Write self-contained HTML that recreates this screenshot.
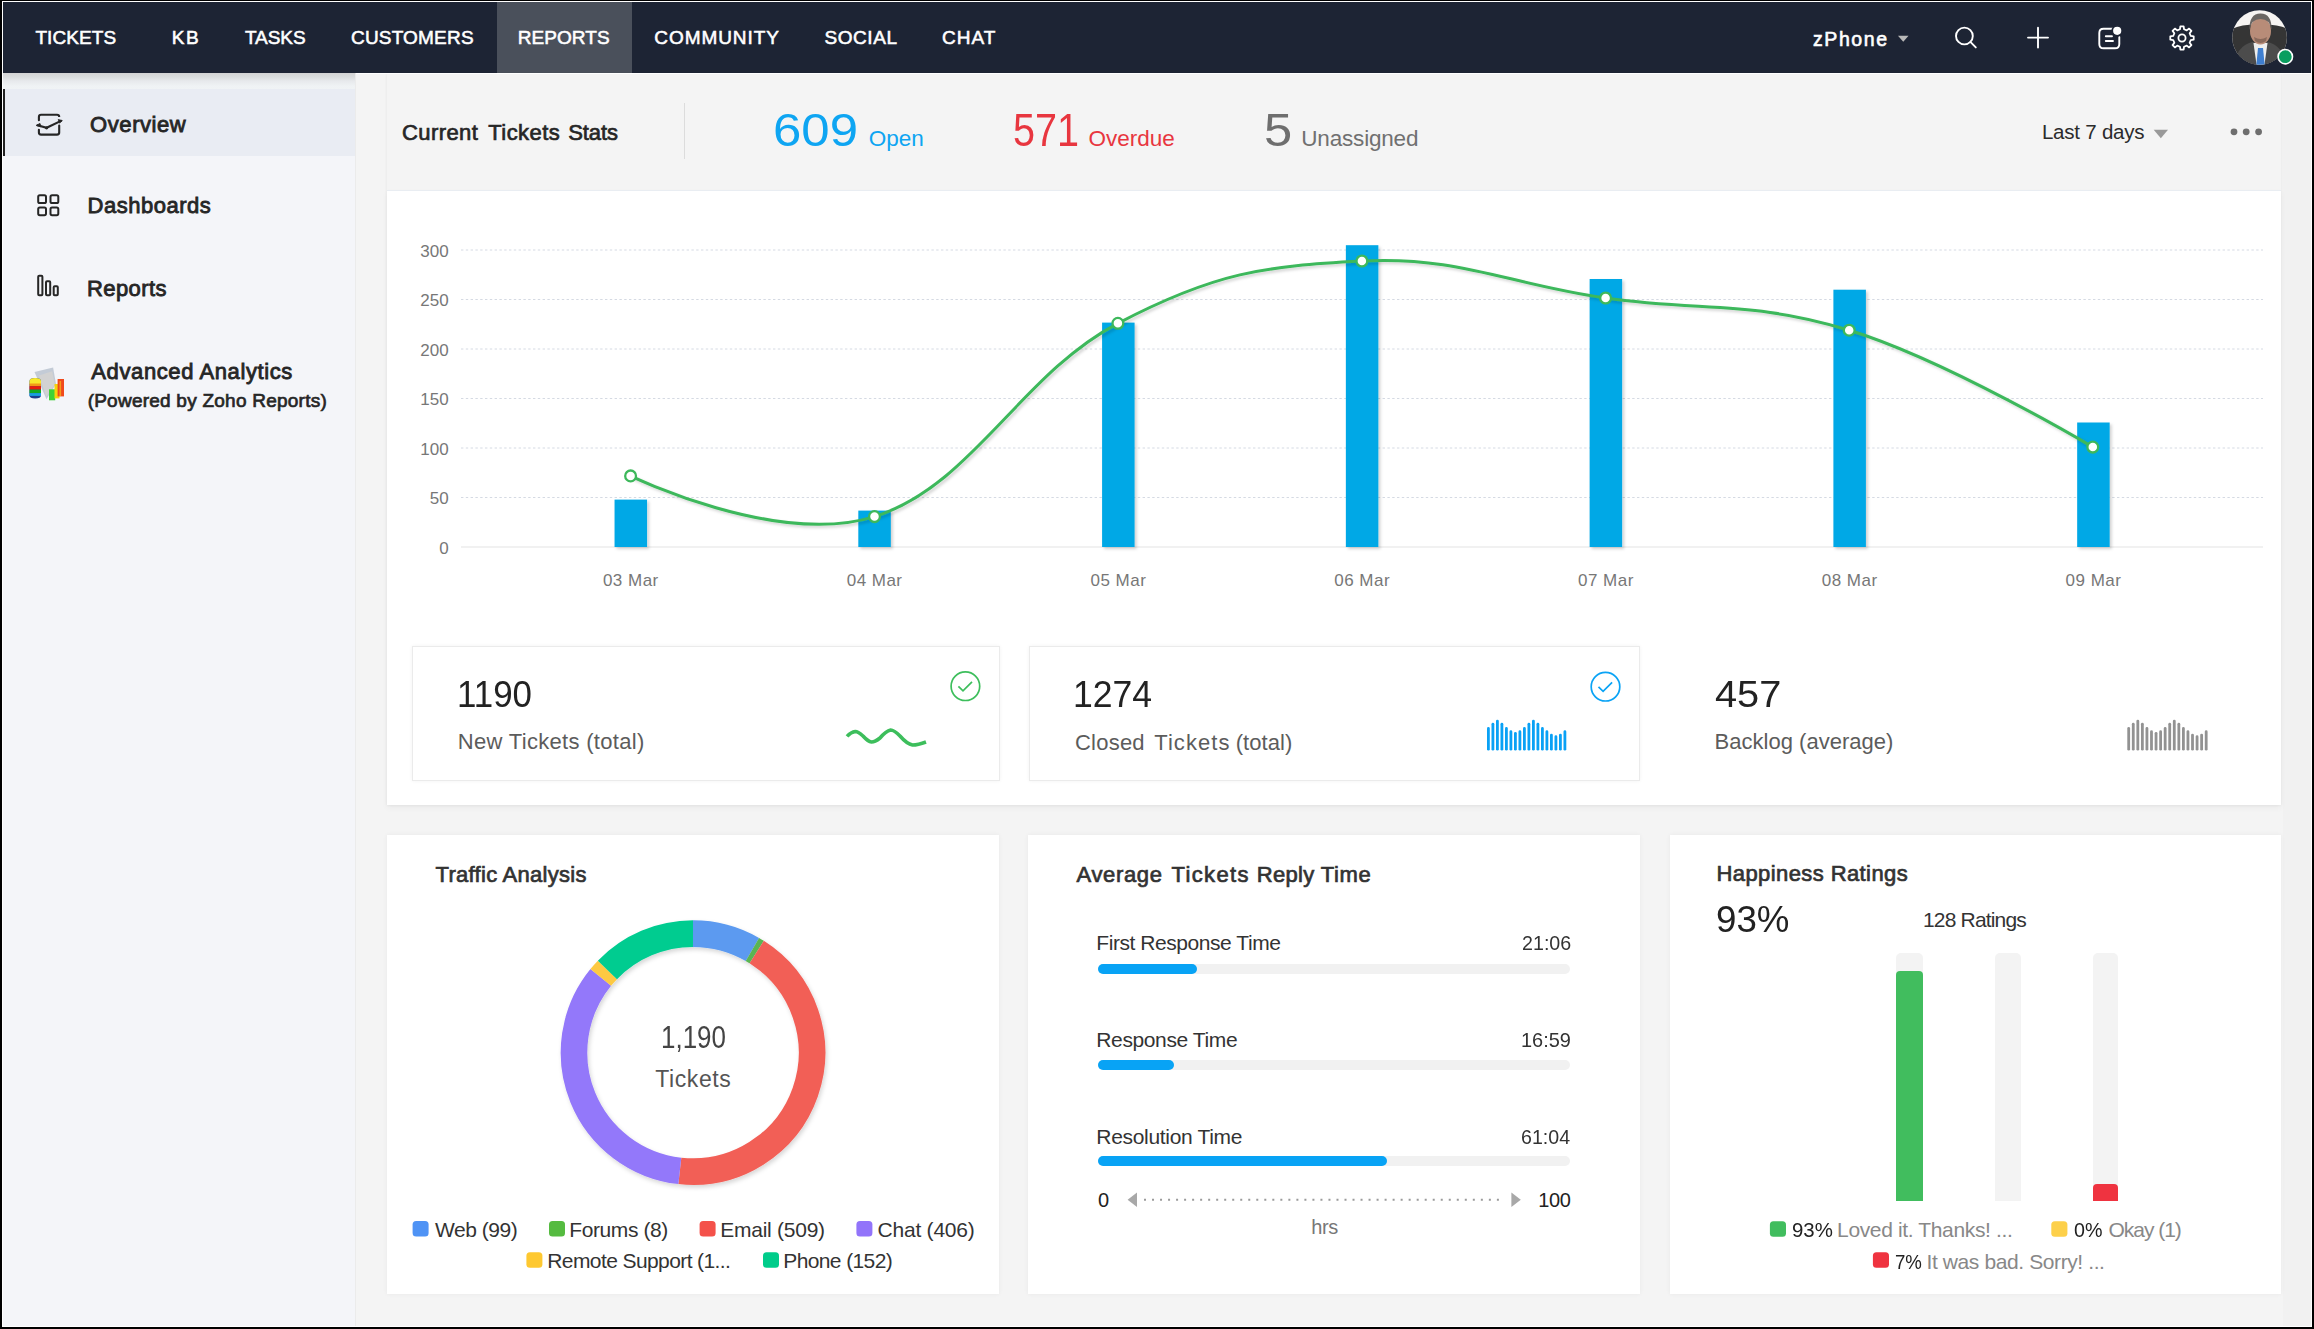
<!DOCTYPE html>
<html><head><meta charset="utf-8"><title>Reports</title>
<style>
html,body{margin:0;padding:0;}
body{width:2314px;height:1329px;overflow:hidden;background:#000;position:relative;font-family:'Liberation Sans', sans-serif;}
.t{position:absolute;line-height:1;white-space:nowrap;}
</style></head><body>
<div style="position:absolute;left:2px;top:1px;width:2310px;height:1326px;background:#fff"></div>
<div style="position:absolute;left:3px;top:2px;width:2308px;height:1324px;background:#f4f4f4"></div><div style="position:absolute;left:2283px;top:74px;width:28px;height:1252px;background:#f1f1f1"></div><div style="position:absolute;left:3px;top:73px;width:352px;height:1253px;background:#f4f5f9"></div><div style="position:absolute;left:355px;top:73px;width:1px;height:1253px;background:#ebebeb"></div><div style="position:absolute;left:3px;top:73px;width:352px;height:16px;background:linear-gradient(#d3d3d4,#d9dcdd 25%,#e7e9ec 50%,#eff2f4 80%,#f0f3f5)"></div><div style="position:absolute;left:3px;top:89px;width:352px;height:67px;background:#e9ecf3"></div><div style="position:absolute;left:3px;top:89px;width:2px;height:67px;background:#222"></div><div style="position:absolute;left:3px;top:2px;width:2308px;height:71px;background:#1d2434"></div><div style="position:absolute;left:497px;top:2px;width:135px;height:71px;background:#4a505b"></div><div class="t" style="left:35.38px;top:28.20px;font-size:19px;color:#ffffff;letter-spacing:0.108px;-webkit-text-stroke:0.55px #ffffff;">TICKETS</div><div class="t" style="left:171.78px;top:28.20px;font-size:19px;color:#ffffff;letter-spacing:1.550px;-webkit-text-stroke:0.55px #ffffff;">KB</div><div class="t" style="left:244.88px;top:28.20px;font-size:19px;color:#ffffff;letter-spacing:-0.037px;-webkit-text-stroke:0.55px #ffffff;">TASKS</div><div class="t" style="left:350.97px;top:28.20px;font-size:19px;color:#ffffff;letter-spacing:0.194px;-webkit-text-stroke:0.55px #ffffff;">CUSTOMERS</div><div class="t" style="left:517.77px;top:28.20px;font-size:19px;color:#ffffff;letter-spacing:0.058px;-webkit-text-stroke:0.55px #ffffff;">REPORTS</div><div class="t" style="left:654.27px;top:28.20px;font-size:19px;color:#ffffff;letter-spacing:0.931px;-webkit-text-stroke:0.55px #ffffff;">COMMUNITY</div><div class="t" style="left:824.38px;top:28.20px;font-size:19px;color:#ffffff;letter-spacing:0.590px;-webkit-text-stroke:0.55px #ffffff;">SOCIAL</div><div class="t" style="left:942.07px;top:28.20px;font-size:19px;color:#ffffff;letter-spacing:1.017px;-webkit-text-stroke:0.55px #ffffff;">CHAT</div><div class="t" style="left:1813.00px;top:30.30px;font-size:19.5px;color:#ffffff;letter-spacing:1.580px;-webkit-text-stroke:0.6px #ffffff;">zPhone</div><div style="position:absolute;left:387px;top:74px;width:1894px;height:731px;background:#f4f4f4;box-shadow:0 0 3px rgba(0,0,0,0.07)"></div><div style="position:absolute;left:356px;top:73px;width:1955px;height:1px;background:#fff"></div><div style="position:absolute;left:684px;top:103px;width:1px;height:56px;background:#dcdcdc"></div><div class="t" style="left:402.05px;top:121.50px;font-size:22px;color:#262626;letter-spacing:0.400px;-webkit-text-stroke:0.7px #262626;">Current</div><div class="t" style="left:488.25px;top:121.50px;font-size:22px;color:#262626;letter-spacing:0.450px;-webkit-text-stroke:0.7px #262626;">Tickets</div><div class="t" style="left:568.15px;top:121.50px;font-size:22px;color:#262626;letter-spacing:-0.075px;-webkit-text-stroke:0.7px #262626;">Stats</div><div class="t" style="left:773.47px;top:106.90px;font-size:46.5px;color:#0ea5f2;transform:scaleX(1.0959);transform-origin:0 0;">609</div><div class="t" style="left:868.70px;top:128.20px;font-size:22.5px;color:#0ea5f2;">Open</div><div class="t" style="left:1012.88px;top:106.90px;font-size:46.5px;color:#e8363f;transform:scaleX(0.8515);transform-origin:0 0;">571</div><div class="t" style="left:1088.40px;top:128.20px;font-size:22.5px;color:#e8363f;">Overdue</div><div class="t" style="left:1263.93px;top:106.90px;font-size:46.5px;color:#6e6e6e;transform:scaleX(1.0909);transform-origin:0 0;">5</div><div class="t" style="left:1301.30px;top:128.20px;font-size:22.5px;color:#707070;letter-spacing:-0.189px;">Unassigned</div><div class="t" style="left:2041.90px;top:121.70px;font-size:20.5px;color:#2b2b2b;letter-spacing:-0.220px;">Last 7 days</div><div style="position:absolute;left:387px;top:190px;width:1894px;height:615px;background:#fff;box-shadow:0 3px 6px rgba(0,0,0,0.045);border-top:1px solid #e9edf2;box-sizing:border-box"></div><div class="t" style="left:439.20px;top:539.50px;font-size:17px;color:#777777;">0</div><div class="t" style="left:429.70px;top:490.00px;font-size:17px;color:#777777;">50</div><div class="t" style="left:420.30px;top:440.50px;font-size:17px;color:#777777;">100</div><div class="t" style="left:420.30px;top:391.00px;font-size:17px;color:#777777;">150</div><div class="t" style="left:420.30px;top:341.50px;font-size:17px;color:#777777;">200</div><div class="t" style="left:420.30px;top:292.00px;font-size:17px;color:#777777;">250</div><div class="t" style="left:420.30px;top:242.50px;font-size:17px;color:#777777;">300</div><div class="t" style="left:602.95px;top:572.00px;font-size:17px;color:#777777;letter-spacing:0.480px;">03 Mar</div><div class="t" style="left:846.72px;top:572.00px;font-size:17px;color:#777777;letter-spacing:0.480px;">04 Mar</div><div class="t" style="left:1090.49px;top:572.00px;font-size:17px;color:#777777;letter-spacing:0.480px;">05 Mar</div><div class="t" style="left:1334.26px;top:572.00px;font-size:17px;color:#777777;letter-spacing:0.480px;">06 Mar</div><div class="t" style="left:1578.03px;top:572.00px;font-size:17px;color:#777777;letter-spacing:0.480px;">07 Mar</div><div class="t" style="left:1821.80px;top:572.00px;font-size:17px;color:#777777;letter-spacing:0.480px;">08 Mar</div><div class="t" style="left:2065.57px;top:572.00px;font-size:17px;color:#777777;letter-spacing:0.480px;">09 Mar</div><div style="position:absolute;left:412px;top:646px;width:588px;height:135px;background:#fff;border:1px solid #ebebeb;box-shadow:0 0 4px rgba(0,0,0,0.05);box-sizing:border-box"></div><div style="position:absolute;left:1029px;top:646px;width:611px;height:135px;background:#fff;border:1px solid #ebebeb;box-shadow:0 0 4px rgba(0,0,0,0.05);box-sizing:border-box"></div><div class="t" style="left:456.96px;top:676.00px;font-size:37px;color:#222222;transform:scaleX(0.9429);transform-origin:0 0;">1190</div><div class="t" style="left:457.80px;top:731.40px;font-size:22px;color:#5c5c5c;letter-spacing:0.311px;">New Tickets (total)</div><div class="t" style="left:1073.31px;top:676.40px;font-size:37px;color:#222222;transform:scaleX(0.9617);transform-origin:0 0;">1274</div><div class="t" style="left:1075.00px;top:731.50px;font-size:22px;color:#5c5c5c;letter-spacing:0.220px;">Closed</div><div class="t" style="left:1154.20px;top:731.50px;font-size:22px;color:#5c5c5c;letter-spacing:1.083px;">Tickets</div><div class="t" style="left:1235.70px;top:731.50px;font-size:22px;color:#5c5c5c;letter-spacing:0.067px;">(total)</div><div class="t" style="left:1715.44px;top:676.00px;font-size:37px;color:#222222;transform:scaleX(1.0745);transform-origin:0 0;">457</div><div class="t" style="left:1714.50px;top:730.80px;font-size:22px;color:#5c5c5c;letter-spacing:0.019px;">Backlog (average)</div><div style="position:absolute;left:387px;top:835px;width:612px;height:459px;background:#fff;box-shadow:0 0 5px rgba(0,0,0,0.05)"></div><div style="position:absolute;left:1028px;top:835px;width:612px;height:459px;background:#fff;box-shadow:0 0 5px rgba(0,0,0,0.05)"></div><div style="position:absolute;left:1670px;top:835px;width:611px;height:459px;background:#fff;box-shadow:0 0 5px rgba(0,0,0,0.05)"></div><div class="t" style="left:435.55px;top:863.60px;font-size:22px;color:#333333;letter-spacing:0.280px;-webkit-text-stroke:0.7px #333333;">Traffic Analysis</div><div class="t" style="left:1076.55px;top:864.00px;font-size:22px;color:#333333;letter-spacing:0.633px;-webkit-text-stroke:0.7px #333333;">Average</div><div class="t" style="left:1171.45px;top:864.00px;font-size:22px;color:#333333;letter-spacing:1.383px;-webkit-text-stroke:0.7px #333333;">Tickets</div><div class="t" style="left:1256.75px;top:864.00px;font-size:22px;color:#333333;letter-spacing:0.325px;-webkit-text-stroke:0.7px #333333;">Reply</div><div class="t" style="left:1320.85px;top:864.00px;font-size:22px;color:#333333;letter-spacing:0.567px;-webkit-text-stroke:0.7px #333333;">Time</div><div class="t" style="left:1716.55px;top:863.30px;font-size:22px;color:#333333;letter-spacing:0.406px;-webkit-text-stroke:0.7px #333333;">Happiness Ratings</div><div class="t" style="left:661.45px;top:1020.60px;font-size:32px;color:#444444;transform:scaleX(0.8105);transform-origin:0 0;">1,190</div><div class="t" style="left:655.30px;top:1068.40px;font-size:23px;color:#555555;letter-spacing:0.583px;">Tickets</div><div class="t" style="left:434.90px;top:1219.00px;font-size:21px;color:#333333;letter-spacing:-0.443px;">Web (99)</div><div class="t" style="left:569.30px;top:1219.00px;font-size:21px;color:#333333;letter-spacing:-0.411px;">Forums (8)</div><div class="t" style="left:720.30px;top:1219.00px;font-size:21px;color:#333333;letter-spacing:-0.260px;">Email (509)</div><div class="t" style="left:877.60px;top:1219.00px;font-size:21px;color:#333333;letter-spacing:-0.233px;">Chat (406)</div><div class="t" style="left:547.30px;top:1249.60px;font-size:21px;color:#333333;letter-spacing:-0.595px;">Remote Support (1...</div><div class="t" style="left:783.30px;top:1249.60px;font-size:21px;color:#333333;letter-spacing:-0.620px;">Phone (152)</div><div class="t" style="left:1096.30px;top:932.20px;font-size:21px;color:#333333;letter-spacing:-0.444px;">First Response Time</div><div class="t" style="left:1521.56px;top:932.20px;font-size:21px;color:#333333;transform:scaleX(0.9369);transform-origin:0 0;">21:06</div><div class="t" style="left:1096.30px;top:1028.70px;font-size:21px;color:#333333;letter-spacing:-0.383px;">Response Time</div><div class="t" style="left:1520.98px;top:1028.70px;font-size:21px;color:#333333;transform:scaleX(0.9500);transform-origin:0 0;">16:59</div><div class="t" style="left:1096.30px;top:1125.60px;font-size:21px;color:#333333;letter-spacing:-0.314px;">Resolution Time</div><div class="t" style="left:1521.47px;top:1125.60px;font-size:21px;color:#333333;transform:scaleX(0.9332);transform-origin:0 0;">61:04</div><div style="position:absolute;left:1098px;top:964px;width:472px;height:9.5px;background:#f1f1f1;border-radius:5px"></div><div style="position:absolute;left:1098px;top:964px;width:99px;height:9.5px;background:#08a3f5;border-radius:5px"></div><div style="position:absolute;left:1098px;top:1060px;width:472px;height:9.5px;background:#f1f1f1;border-radius:5px"></div><div style="position:absolute;left:1098px;top:1060px;width:76px;height:9.5px;background:#08a3f5;border-radius:5px"></div><div style="position:absolute;left:1098px;top:1156.3px;width:472px;height:9.5px;background:#f1f1f1;border-radius:5px"></div><div style="position:absolute;left:1098px;top:1156.3px;width:288.5px;height:9.5px;background:#08a3f5;border-radius:5px"></div><div class="t" style="left:1098.10px;top:1189.90px;font-size:20px;color:#222222;">0</div><div class="t" style="left:1538.20px;top:1189.90px;font-size:20px;color:#222222;letter-spacing:-0.400px;">100</div><div class="t" style="left:1311.20px;top:1217.40px;font-size:20px;color:#777777;letter-spacing:-0.350px;">hrs</div><div class="t" style="left:1715.71px;top:900.80px;font-size:37px;color:#222222;transform:scaleX(0.9916);transform-origin:0 0;">93%</div><div class="t" style="left:1923.00px;top:908.50px;font-size:21px;color:#333333;letter-spacing:-0.830px;">128 Ratings</div><div style="position:absolute;left:1895.8px;top:952.9px;width:26.799999999999955px;height:248.10000000000002px;background:#f3f3f3;border-radius:5px 5px 0 0"></div><div style="position:absolute;left:1994.6px;top:952.9px;width:26.100000000000136px;height:248.10000000000002px;background:#f3f3f3;border-radius:5px 5px 0 0"></div><div style="position:absolute;left:2092.7px;top:952.9px;width:25.600000000000364px;height:248.10000000000002px;background:#f3f3f3;border-radius:5px 5px 0 0"></div><div style="position:absolute;left:1895.8px;top:970.5px;width:26.799999999999955px;height:230.5px;background:#41bd5e;border-radius:4px 4px 0 0"></div><div style="position:absolute;left:2092.7px;top:1183.8px;width:25.600000000000364px;height:17.200000000000045px;background:#ef3340;border-radius:4px 4px 0 0"></div><div class="t" style="left:1791.83px;top:1219.40px;font-size:21px;color:#222222;transform:scaleX(0.9727);transform-origin:0 0;">93%</div><div class="t" style="left:1837.10px;top:1219.40px;font-size:21px;color:#888888;letter-spacing:-0.360px;">Loved it. Thanks! ...</div><div class="t" style="left:2074.25px;top:1219.40px;font-size:21px;color:#222222;transform:scaleX(0.9375);transform-origin:0 0;">0%</div><div class="t" style="left:2108.50px;top:1219.40px;font-size:21px;color:#888888;letter-spacing:-1.029px;">Okay (1)</div><div class="t" style="left:1894.82px;top:1250.50px;font-size:21px;color:#222222;transform:scaleX(0.8877);transform-origin:0 0;">7%</div><div class="t" style="left:1926.50px;top:1250.50px;font-size:21px;color:#888888;letter-spacing:-0.395px;">It was bad. Sorry! ...</div><div class="t" style="left:90.12px;top:114.20px;font-size:22px;color:#262626;letter-spacing:0.564px;-webkit-text-stroke:0.85px #262626;">Overview</div><div class="t" style="left:87.62px;top:194.60px;font-size:22px;color:#262626;letter-spacing:0.494px;-webkit-text-stroke:0.85px #262626;">Dashboards</div><div class="t" style="left:87.12px;top:278.10px;font-size:22px;color:#262626;letter-spacing:0.375px;-webkit-text-stroke:0.85px #262626;">Reports</div><div class="t" style="left:91.33px;top:361.10px;font-size:22px;color:#262626;letter-spacing:0.603px;-webkit-text-stroke:0.85px #262626;">Advanced Analytics</div><div class="t" style="left:87.65px;top:391.30px;font-size:19px;color:#262626;letter-spacing:0.237px;-webkit-text-stroke:0.7px #262626;">(Powered by Zoho Reports)</div>
<svg style="position:absolute;left:0;top:0" width="2314" height="1329" viewBox="0 0 2314 1329"><defs><filter id="sh" x="-20%" y="-20%" width="140%" height="140%"><feDropShadow dx="2" dy="2" stdDeviation="1.5" flood-color="#000" flood-opacity="0.18"/></filter><filter id="sh2" x="-20%" y="-20%" width="140%" height="140%"><feDropShadow dx="1.5" dy="2.5" stdDeviation="2" flood-color="#000" flood-opacity="0.16"/></filter><clipPath id="avc"><circle cx="2259.6" cy="37.5" r="27.3"/></clipPath></defs><line x1="461" y1="547.0" x2="2263" y2="547.0" stroke="#e3e3e3" stroke-width="1.2"/><line x1="461" y1="497.5" x2="2263" y2="497.5" stroke="#d5dae3" stroke-width="1" stroke-dasharray="2.4 2.4"/><line x1="461" y1="448.0" x2="2263" y2="448.0" stroke="#d5dae3" stroke-width="1" stroke-dasharray="2.4 2.4"/><line x1="461" y1="398.5" x2="2263" y2="398.5" stroke="#d5dae3" stroke-width="1" stroke-dasharray="2.4 2.4"/><line x1="461" y1="349.0" x2="2263" y2="349.0" stroke="#d5dae3" stroke-width="1" stroke-dasharray="2.4 2.4"/><line x1="461" y1="299.5" x2="2263" y2="299.5" stroke="#d5dae3" stroke-width="1" stroke-dasharray="2.4 2.4"/><line x1="461" y1="250.0" x2="2263" y2="250.0" stroke="#d5dae3" stroke-width="1" stroke-dasharray="2.4 2.4"/><g filter="url(#sh)"><rect x="614.55" y="499.6" width="32.5" height="47.40" fill="#00a8e6"/><rect x="858.32" y="510.6" width="32.5" height="36.40" fill="#00a8e6"/><rect x="1102.09" y="322.6" width="32.5" height="224.40" fill="#00a8e6"/><rect x="1345.86" y="245.2" width="32.5" height="301.80" fill="#00a8e6"/><rect x="1589.63" y="279" width="32.5" height="268.00" fill="#00a8e6"/><rect x="1833.40" y="289.7" width="32.5" height="257.30" fill="#00a8e6"/><rect x="2077.17" y="422.5" width="32.5" height="124.50" fill="#00a8e6"/></g><path d="M630.6,475.9 C630.60,475.90 776.94,547.15 874.5,516.6 C971.86,486.11 1020.54,374.36 1117.9,323.3 C1215.50,272.12 1264.30,266.06 1361.9,261 C1459.38,255.94 1508.12,284.16 1605.6,298 C1703.04,311.84 1751.76,300.38 1849.2,330.2 C1946.64,360.02 2092.80,447.10 2092.8,447.1" fill="none" stroke="#3db85b" stroke-width="3" filter="url(#sh)"/><circle cx="630.6" cy="475.9" r="5.4" fill="#fff" stroke="#3db85b" stroke-width="2.3"/><circle cx="874.5" cy="516.6" r="5.4" fill="#fff" stroke="#3db85b" stroke-width="2.3"/><circle cx="1117.9" cy="323.3" r="5.4" fill="#fff" stroke="#3db85b" stroke-width="2.3"/><circle cx="1361.9" cy="261" r="5.4" fill="#fff" stroke="#3db85b" stroke-width="2.3"/><circle cx="1605.6" cy="298" r="5.4" fill="#fff" stroke="#3db85b" stroke-width="2.3"/><circle cx="1849.2" cy="330.2" r="5.4" fill="#fff" stroke="#3db85b" stroke-width="2.3"/><circle cx="2092.8" cy="447.1" r="5.4" fill="#fff" stroke="#3db85b" stroke-width="2.3"/><g filter="url(#sh2)"><path d="M693.00,933.60 A119,119 0 0 1 752.41,949.49" fill="none" stroke="#5b9af0" stroke-width="26.6"/><path d="M752.41,949.49 A119,119 0 0 1 756.71,952.09" fill="none" stroke="#5ab552" stroke-width="26.6"/><path d="M756.71,952.09 A119,119 0 0 1 679.83,1170.87" fill="none" stroke="#f25f57" stroke-width="26.6"/><path d="M679.83,1170.87 A119,119 0 0 1 600.75,977.43" fill="none" stroke="#9378fa" stroke-width="26.6"/><path d="M600.75,977.43 A119,119 0 0 1 607.42,969.91" fill="none" stroke="#fdc942" stroke-width="26.6"/><path d="M607.42,969.91 A119,119 0 0 1 693.00,933.60" fill="none" stroke="#00cc90" stroke-width="26.6"/></g><rect x="412.6" y="1221" width="16" height="15.6" rx="3.5" fill="#4f93f5"/><rect x="549" y="1221" width="16" height="15.6" rx="3.5" fill="#55bb40"/><rect x="699.6" y="1221" width="16" height="15.6" rx="3.5" fill="#f4514a"/><rect x="856.4" y="1221" width="16" height="15.6" rx="3.5" fill="#9274fa"/><rect x="526.4" y="1252.2" width="16" height="15.6" rx="3.5" fill="#fec830"/><rect x="763" y="1252.2" width="16" height="15.6" rx="3.5" fill="#00cc8a"/><rect x="1769.9" y="1221.3" width="16.1" height="15.5" rx="3.5" fill="#41bd5e"/><rect x="2051.3" y="1221.3" width="16.1" height="15.5" rx="3.5" fill="#fdd04a"/><rect x="1872.9" y="1252.3" width="16.1" height="15.5" rx="3.5" fill="#ef3340"/><path d="M1127.6,1199.8 L1137,1192.6 L1137,1207 Z" fill="#a8a8a8"/><path d="M1520.8,1199.8 L1511.4,1192.6 L1511.4,1207 Z" fill="#a8a8a8"/><line x1="1144" y1="1199.8" x2="1504" y2="1199.8" stroke="#9a9a9a" stroke-width="2" stroke-dasharray="2 6.02"/><circle cx="965.4" cy="686.2" r="14.3" fill="none" stroke="#3dbe5c" stroke-width="1.7"/><path d="M958.4,686.3 L963,690.9 L972,681.8" fill="none" stroke="#3dbe5c" stroke-width="1.7"/><circle cx="1605.5" cy="686.7" r="14.3" fill="none" stroke="#0aa3f5" stroke-width="1.7"/><path d="M1598.5,686.8 L1603.1,691.4 L1612.1,682.3" fill="none" stroke="#0aa3f5" stroke-width="1.7"/><path d="M847,736.4 Q851,732 855.3,731.5 Q858,731.5 863,736 Q868,741.5 871.5,742 Q875,742 880,738 Q886,731 890.7,730 Q894,730 900,736 Q907,744 912.5,745 Q918,745 926,742" fill="none" stroke="#3dbe5c" stroke-width="3.6" stroke-linecap="butt"/><line x1="1488.40" y1="728.4" x2="1488.40" y2="749.2" stroke="#09a1f5" stroke-width="2.8" stroke-linecap="round"/><line x1="1492.90" y1="724.1999999999999" x2="1492.90" y2="749.2" stroke="#09a1f5" stroke-width="2.8" stroke-linecap="round"/><line x1="1497.40" y1="721.1" x2="1497.40" y2="749.2" stroke="#09a1f5" stroke-width="2.8" stroke-linecap="round"/><line x1="1501.90" y1="724.1999999999999" x2="1501.90" y2="749.2" stroke="#09a1f5" stroke-width="2.8" stroke-linecap="round"/><line x1="1506.40" y1="728.4" x2="1506.40" y2="749.2" stroke="#09a1f5" stroke-width="2.8" stroke-linecap="round"/><line x1="1510.90" y1="731.6999999999999" x2="1510.90" y2="749.2" stroke="#09a1f5" stroke-width="2.8" stroke-linecap="round"/><line x1="1515.40" y1="733.3" x2="1515.40" y2="749.2" stroke="#09a1f5" stroke-width="2.8" stroke-linecap="round"/><line x1="1519.90" y1="731.6999999999999" x2="1519.90" y2="749.2" stroke="#09a1f5" stroke-width="2.8" stroke-linecap="round"/><line x1="1524.40" y1="728.4" x2="1524.40" y2="749.2" stroke="#09a1f5" stroke-width="2.8" stroke-linecap="round"/><line x1="1528.90" y1="724.1999999999999" x2="1528.90" y2="749.2" stroke="#09a1f5" stroke-width="2.8" stroke-linecap="round"/><line x1="1533.40" y1="721.1" x2="1533.40" y2="749.2" stroke="#09a1f5" stroke-width="2.8" stroke-linecap="round"/><line x1="1537.90" y1="724.1999999999999" x2="1537.90" y2="749.2" stroke="#09a1f5" stroke-width="2.8" stroke-linecap="round"/><line x1="1542.40" y1="728.4" x2="1542.40" y2="749.2" stroke="#09a1f5" stroke-width="2.8" stroke-linecap="round"/><line x1="1546.90" y1="731.6999999999999" x2="1546.90" y2="749.2" stroke="#09a1f5" stroke-width="2.8" stroke-linecap="round"/><line x1="1551.40" y1="735.1" x2="1551.40" y2="749.2" stroke="#09a1f5" stroke-width="2.8" stroke-linecap="round"/><line x1="1555.90" y1="736.6999999999999" x2="1555.90" y2="749.2" stroke="#09a1f5" stroke-width="2.8" stroke-linecap="round"/><line x1="1560.40" y1="735.1" x2="1560.40" y2="749.2" stroke="#09a1f5" stroke-width="2.8" stroke-linecap="round"/><line x1="1564.90" y1="731.6999999999999" x2="1564.90" y2="749.2" stroke="#09a1f5" stroke-width="2.8" stroke-linecap="round"/><line x1="2128.70" y1="728.4" x2="2128.70" y2="749.2" stroke="#929292" stroke-width="2.8" stroke-linecap="round"/><line x1="2133.26" y1="724.1999999999999" x2="2133.26" y2="749.2" stroke="#929292" stroke-width="2.8" stroke-linecap="round"/><line x1="2137.82" y1="721.1" x2="2137.82" y2="749.2" stroke="#929292" stroke-width="2.8" stroke-linecap="round"/><line x1="2142.37" y1="724.1999999999999" x2="2142.37" y2="749.2" stroke="#929292" stroke-width="2.8" stroke-linecap="round"/><line x1="2146.93" y1="728.4" x2="2146.93" y2="749.2" stroke="#929292" stroke-width="2.8" stroke-linecap="round"/><line x1="2151.49" y1="731.6999999999999" x2="2151.49" y2="749.2" stroke="#929292" stroke-width="2.8" stroke-linecap="round"/><line x1="2156.05" y1="733.3" x2="2156.05" y2="749.2" stroke="#929292" stroke-width="2.8" stroke-linecap="round"/><line x1="2160.61" y1="731.6999999999999" x2="2160.61" y2="749.2" stroke="#929292" stroke-width="2.8" stroke-linecap="round"/><line x1="2165.16" y1="728.4" x2="2165.16" y2="749.2" stroke="#929292" stroke-width="2.8" stroke-linecap="round"/><line x1="2169.72" y1="724.1999999999999" x2="2169.72" y2="749.2" stroke="#929292" stroke-width="2.8" stroke-linecap="round"/><line x1="2174.28" y1="721.1" x2="2174.28" y2="749.2" stroke="#929292" stroke-width="2.8" stroke-linecap="round"/><line x1="2178.84" y1="724.1999999999999" x2="2178.84" y2="749.2" stroke="#929292" stroke-width="2.8" stroke-linecap="round"/><line x1="2183.40" y1="728.4" x2="2183.40" y2="749.2" stroke="#929292" stroke-width="2.8" stroke-linecap="round"/><line x1="2187.95" y1="731.6999999999999" x2="2187.95" y2="749.2" stroke="#929292" stroke-width="2.8" stroke-linecap="round"/><line x1="2192.51" y1="735.1" x2="2192.51" y2="749.2" stroke="#929292" stroke-width="2.8" stroke-linecap="round"/><line x1="2197.07" y1="736.6999999999999" x2="2197.07" y2="749.2" stroke="#929292" stroke-width="2.8" stroke-linecap="round"/><line x1="2201.63" y1="735.1" x2="2201.63" y2="749.2" stroke="#929292" stroke-width="2.8" stroke-linecap="round"/><line x1="2206.19" y1="731.6999999999999" x2="2206.19" y2="749.2" stroke="#929292" stroke-width="2.8" stroke-linecap="round"/><g fill="none" stroke="#262626" stroke-width="2.1" stroke-linecap="round"><path d="M38.9,120.3 L38.9,117 Q38.9,114.8 41.1,114.8 L57,114.8 Q59.2,114.8 59.2,117 L59.2,116.5"/><path d="M38.9,129.7 L38.9,132.5 Q38.9,134.6 41.1,134.6 L57,134.6 Q59.2,134.6 59.2,132.5 L59.2,125.6"/><path d="M37.5,125.2 L46.6,127.8 L61,120.9"/><path d="M36.5,125.3 L40,123.4 L41,126.5 Z M62,120.5 L58.2,119.5 L59.5,122.8 Z" fill="#262626" stroke-width="0.8"/><circle cx="46.6" cy="127.8" r="1.6" fill="#262626" stroke="none"/></g><g fill="none" stroke="#262626" stroke-width="2"><rect x="38.2" y="195.2" width="7.8" height="7.8" rx="1.6"/><rect x="38.2" y="207.4" width="7.8" height="7.8" rx="1.6"/><rect x="50.5" y="195.2" width="7.8" height="7.8" rx="1.6"/><rect x="50.5" y="207.4" width="7.8" height="7.8" rx="1.6"/><rect x="38.2" y="275.7" width="4.2" height="19.5" rx="1"/><rect x="46" y="281.3" width="4.2" height="13.9" rx="1"/><rect x="53.7" y="286.2" width="4.1" height="9" rx="1"/></g><polygon points="34.5,372 53.1,367.4 56,384 46.5,399.3" fill="#c3cbd6"/><polygon points="39,375.5 52.2,371.2 54.6,384.3 46.4,396.5" fill="#d2d2d2"/><path d="M29.5,381 Q29.5,378 35.2,378 Q41,378 41,381 L41,395.5 Q41,398.5 35.2,398.5 Q29.5,398.5 29.5,395.5 Z" fill="#1d3f8f"/><path d="M29.5,381 Q29.5,378 35.2,378 Q41,378 41,381 L41,384 L29.5,384 Z" fill="#f8e82c"/><rect x="29.5" y="383.5" width="11.5" height="2.8" fill="#f29a17"/><rect x="29.5" y="386.2" width="11.5" height="3.5" fill="#e81c0c"/><rect x="29.5" y="389.6" width="11.5" height="3.6" fill="#14aa22"/><rect x="29.5" y="393.1" width="11.5" height="2.8" fill="#1aa0e0"/><rect x="49" y="389.3" width="6.2" height="11" fill="#3fd236"/><rect x="54.5" y="384" width="5" height="14.4" fill="#f7d10c"/><rect x="57.6" y="379" width="6.4" height="17.4" fill="#f0491c"/><rect x="59.5" y="381" width="1.6" height="15" fill="#f59a1a"/><g fill="none" stroke="#ffffff" stroke-width="1.9" stroke-linecap="round"><polygon points="1898,35.8 1908.5,35.8 1903.25,41.8" fill="#b8b8b8" stroke="none"/><circle cx="1964.4" cy="36" r="8.4"/><line x1="1970.6" y1="42.2" x2="1975.8" y2="47.4"/><line x1="2028" y1="37.6" x2="2048" y2="37.6"/><line x1="2038" y1="27.6" x2="2038" y2="47.6"/><path d="M2113,28.8 L2103.5,28.8 Q2099.3,28.8 2099.3,33 L2099.3,44 Q2099.3,48.3 2103.5,48.3 L2115,48.3 Q2119.3,48.3 2119.3,44 L2119.3,37"/><line x1="2105.8" y1="36.3" x2="2112" y2="36.3"/><line x1="2105.8" y1="41" x2="2113" y2="41"/></g><circle cx="2117.2" cy="30.8" r="5" fill="#fff" stroke="#1d2434" stroke-width="1.8"/><path d="M2179.98,29.23 L2180.36,26.31 L2183.64,26.31 L2184.02,29.23 L2186.77,30.37 L2189.10,28.58 L2191.42,30.90 L2189.63,33.23 L2190.77,35.98 L2193.69,36.36 L2193.69,39.64 L2190.77,40.02 L2189.63,42.77 L2191.42,45.10 L2189.10,47.42 L2186.77,45.63 L2184.02,46.77 L2183.64,49.69 L2180.36,49.69 L2179.98,46.77 L2177.23,45.63 L2174.90,47.42 L2172.58,45.10 L2174.37,42.77 L2173.23,40.02 L2170.31,39.64 L2170.31,36.36 L2173.23,35.98 L2174.37,33.23 L2172.58,30.90 L2174.90,28.58 L2177.23,30.37 Z" fill="none" stroke="#fff" stroke-width="1.8" stroke-linejoin="round"/><circle cx="2182" cy="38" r="3.6" fill="none" stroke="#fff" stroke-width="1.8"/><g clip-path="url(#avc)"><rect x="2230" y="8" width="60" height="60" fill="#f6f4f2"/><path d="M2230,30 Q2240,24 2260,24.5 Q2280,24 2290,30 L2290,70 L2230,70 Z" fill="#353535"/><path d="M2232,70 Q2236,46 2252,42 L2268,42 Q2284,46 2288,70 Z" fill="#4c4c4c"/><path d="M2253.5,43 L2267.5,43 L2264,68 L2257,68 Z" fill="#eeeeee"/><path d="M2258,48 L2263,48 L2265,68 L2256,68 Z" fill="#3f7fd0"/><ellipse cx="2260.5" cy="31" rx="10.5" ry="13.5" fill="#b88c78"/><path d="M2249.5,30 Q2249,13.5 2260.5,13.5 Q2272,13.5 2271.5,30 Q2270,19 2260.5,19 Q2251,19 2249.5,30 Z" fill="#6a6663"/><path d="M2254,37 Q2260.5,41 2267,37 L2266,41 Q2260.5,45 2255,41 Z" fill="#8a6a5c"/></g><circle cx="2285.3" cy="56.7" r="7.2" fill="#0a9e5f" stroke="#fff" stroke-width="1.6"/><circle cx="2234" cy="131.8" r="3.4" fill="#6e6e6e"/><circle cx="2246.2" cy="131.8" r="3.4" fill="#6e6e6e"/><circle cx="2258.6" cy="131.8" r="3.4" fill="#6e6e6e"/><polygon points="2153.7,129.8 2168,129.8 2160.85,138.2" fill="#999"/></svg>
</body></html>
